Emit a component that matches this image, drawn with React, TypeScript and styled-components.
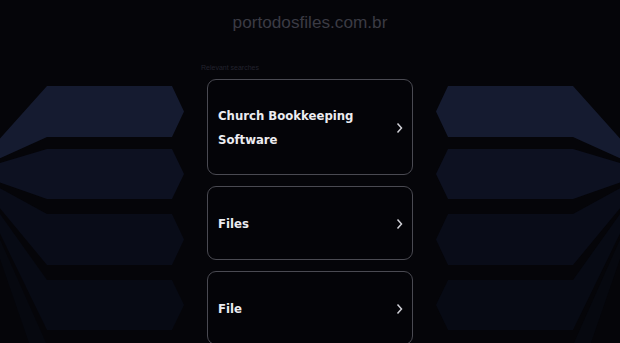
import styled, { createGlobalStyle } from "styled-components";

const GlobalStyle = createGlobalStyle`
  html, body {
    margin: 0;
    padding: 0;
    background-color: #050509;
  }
`;

const Page = styled.div`
  position: relative;
  width: 620px;
  height: 343px;
  overflow: hidden;
  background-color: #050509;
  font-family: "Liberation Sans", Arial, sans-serif;
`;

const Backdrop = styled.svg`
  position: absolute;
  left: 0;
  top: 0;
  z-index: 0;
`;

const Content = styled.div`
  position: relative;
  z-index: 1;
  display: flex;
  flex-direction: column;
  align-items: center;
`;

const Domain = styled.h1`
  margin: 0;
  padding-top: 11px;
  font-size: 17.2px;
  font-weight: normal;
  line-height: 22px;
  color: #3b3b44;
`;

const Column = styled.div`
  width: 218px;
  margin-top: 31px;
  display: flex;
  flex-direction: column;
`;

const Label = styled.div`
  font-size: 7px;
  line-height: 8px;
  color: #23232e;
  margin-bottom: 7px;
`;

const Card = styled.div<{ $tall?: boolean }>`
  margin: 0 6px 11px;
  height: ${(p) => (p.$tall ? 96 : 74)}px;
  box-sizing: border-box;
  border: 1.5px solid #4a4a52;
  border-radius: 9px;
  background-color: #040408;
  display: flex;
  align-items: center;
  justify-content: space-between;
  padding: 1px 9px 0 10px;
`;

const CardText = styled.span`
  font-family: "DejaVu Sans Condensed", "DejaVu Sans", Verdana, sans-serif;
  font-stretch: condensed;
  font-weight: bold;
  font-size: 13px;
  line-height: 24px;
  color: #ececf0;
`;

const Chevron = () => (
  <svg width="8" height="12" viewBox="0 0 8 12">
    <polyline points="2.5,1.5 6.5,6 2.5,10.5" fill="none" stroke="#d0d0d6" strokeWidth="1.5" />
  </svg>
);

const V = { x: -30, y: 172 };
const bands = [
  { top: 86, bot: 137, fill: "#151b30" },
  { top: 149, bot: 199, fill: "#0d1121" },
  { top: 214, bot: 265, fill: "#090c18" },
  { top: 280, bot: 330, fill: "#070a14" },
  { top: 345, bot: 395, fill: "#06080f" },
];

function edgeAt0(y: number) {
  return y + ((V.y - y) * 47) / 77;
}

function leftPoints(top: number, bot: number) {
  const mid = (top + bot) / 2;
  return [
    `0,${edgeAt0(top)}`,
    `47,${top}`,
    `172,${top}`,
    `184,${mid}`,
    `172,${bot}`,
    `47,${bot}`,
    `0,${edgeAt0(bot)}`,
  ].join(" ");
}

function Tunnel() {
  return (
    <Backdrop width="620" height="343" viewBox="0 0 620 343">
      <g>
        {bands.map((b) => (
          <polygon key={b.top} points={leftPoints(b.top, b.bot)} fill={b.fill} />
        ))}
      </g>
      <g transform="translate(620 0) scale(-1 1)">
        {bands.map((b) => (
          <polygon key={b.top} points={leftPoints(b.top, b.bot)} fill={b.fill} />
        ))}
      </g>
    </Backdrop>
  );
}

const links = [
  { text: ["Church Bookkeeping", "Software"], tall: true },
  { text: ["Files"] },
  { text: ["File"] },
];

export default function App() {
  return (
    <Page>
      <GlobalStyle />
      <Tunnel />
      <Content>
        <Domain>portodosfiles.com.br</Domain>
        <Column>
          <Label>Relevant searches</Label>
          {links.map((l) => (
            <Card key={l.text[0]} $tall={l.tall}>
              <CardText>
                {l.text.map((t, i) => (
                  <span key={t}>
                    {i > 0 && <br />}
                    {t}
                  </span>
                ))}
              </CardText>
              <Chevron />
            </Card>
          ))}
        </Column>
      </Content>
    </Page>
  );
}
